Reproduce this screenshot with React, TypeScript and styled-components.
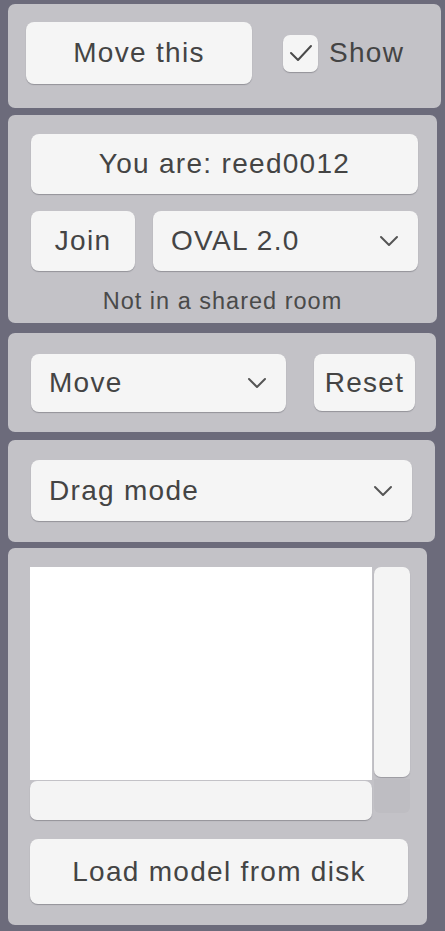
import React from "react";
import styled, { createGlobalStyle } from "styled-components";

const GlobalStyle = createGlobalStyle`
  html, body {
    margin: 0;
    padding: 0;
    background-color: #6c6b7b;
  }
  body {
    font-family: "Liberation Sans", Arial, sans-serif;
    color: #444;
  }
`;

const StyledPageRoot = styled.div`
  width: 445px;
  height: 931px;
  overflow: hidden;
  display: flex;
  flex-direction: column;
  gap: 7px;
  padding: 4px 0 0 8px;
  box-sizing: border-box;
`;

const Panel = styled.div<{ $width: number; $height: number; $mt?: number }>`
  width: ${(p) => p.$width}px;
  height: ${(p) => p.$height}px;
  margin-top: ${(p) => p.$mt ?? 0}px;
  background-color: #c3c2c7;
  border-radius: 7px;
  box-sizing: border-box;
  display: flex;
  flex-direction: column;
  flex-shrink: 0;
`;

const TopRow = styled.div`
  display: flex;
  align-items: center;
  padding: 18px 0 0 18px;
`;

const Row = styled.div<{ $gap: number }>`
  display: flex;
  align-items: flex-start;
  gap: ${(p) => p.$gap}px;
`;

const PanelBody = styled.div<{ $top: number }>`
  display: flex;
  flex-direction: column;
  padding: ${(p) => p.$top}px 0 0 23px;
`;

const Label = styled.span`
  font-size: 28px;
  letter-spacing: 1.3px;
  color: #444;
  line-height: 1;
`;

const Button = styled.div<{ $width: number; $height: number }>`
  width: ${(p) => p.$width}px;
  height: ${(p) => p.$height}px;
  background-color: #f5f5f5;
  border-radius: 8px;
  box-shadow: 0 1px 1px rgba(60, 60, 70, 0.35);
  display: flex;
  align-items: center;
  justify-content: center;
  box-sizing: border-box;
  flex-shrink: 0;
`;

const Dropdown = styled(Button)`
  justify-content: space-between;
  padding: 0 19px 0 18px;
`;

const CheckBox = styled.div`
  width: 35px;
  height: 37px;
  background-color: #f5f5f5;
  border-radius: 7px;
  box-shadow: 0 1px 1px rgba(60, 60, 70, 0.35);
  display: flex;
  align-items: center;
  justify-content: center;
  margin-left: 31px;
  margin-right: 11px;
`;

const StatusText = styled.div`
  font-size: 23.5px;
  letter-spacing: 1px;
  color: #4a4a4a;
  text-align: center;
  margin-top: 17px;
  padding-right: 23px;
`;

const ListGrid = styled.div`
  display: grid;
  grid-template-columns: 342px 36px;
  grid-template-rows: 212px 41px;
  column-gap: 2px;
`;

const ListArea = styled.div`
  background-color: #ffffff;
  grid-row: 1 / span 2;
  grid-column: 1;
  height: 213px;
`;

const ScrollV = styled.div`
  background-color: #f4f4f4;
  border-radius: 7px;
  box-shadow: 0 1px 1px rgba(60, 60, 70, 0.3);
  height: 210px;
`;

const ScrollH = styled.div`
  grid-row: 2;
  grid-column: 1;
  align-self: end;
  height: 39px;
  background-color: #f4f4f4;
  border-radius: 7px;
  box-shadow: 0 1px 1px rgba(60, 60, 70, 0.35);
  position: relative;
  z-index: 1;
`;

const Corner = styled.div`
  grid-row: 2;
  grid-column: 2;
  height: 34px;
  background-color: #bebdc2;
  border-radius: 0 0 6px 6px;
`;

const LoadButton = styled(Button)`
  margin-top: 19px;
`;

const Chevron = () => (
  <svg width="20" height="12" viewBox="0 0 20 12">
    <polyline
      points="2,2 10,10 18,2"
      fill="none"
      stroke="#555"
      strokeWidth="2"
      strokeLinecap="round"
      strokeLinejoin="round"
    />
  </svg>
);

const Check = () => (
  <svg width="26" height="20" viewBox="0 0 26 20">
    <polyline
      points="3,10 10,17 23,3"
      fill="none"
      stroke="#4a4a4a"
      strokeWidth="2"
      strokeLinecap="round"
      strokeLinejoin="round"
    />
  </svg>
);

const App = () => {
  return (
    <StyledPageRoot>
      <GlobalStyle />
      <Panel $width={433} $height={104}>
        <TopRow>
          <Button $width={226} $height={62}>
            <Label>Move this</Label>
          </Button>
          <CheckBox>
            <Check />
          </CheckBox>
          <Label>Show</Label>
        </TopRow>
      </Panel>

      <Panel $width={429} $height={208}>
        <PanelBody $top={19}>
          <Button $width={387} $height={60}>
            <Label>You are: reed0012</Label>
          </Button>
          <Row $gap={18} style={{ marginTop: 17 }}>
            <Button $width={104} $height={60}>
              <Label>Join</Label>
            </Button>
            <Dropdown $width={265} $height={60}>
              <Label>OVAL 2.0</Label>
              <Chevron />
            </Dropdown>
          </Row>
          <StatusText>Not in a shared room</StatusText>
        </PanelBody>
      </Panel>

      <Panel $width={428} $height={99} $mt={3}>
        <PanelBody $top={21}>
          <Row $gap={28}>
            <Dropdown $width={255} $height={58}>
              <Label>Move</Label>
              <Chevron />
            </Dropdown>
            <Button $width={101} $height={57}>
              <Label>Reset</Label>
            </Button>
          </Row>
        </PanelBody>
      </Panel>

      <Panel $width={427} $height={102} $mt={1}>
        <PanelBody $top={20}>
          <Dropdown $width={381} $height={61}>
            <Label>Drag mode</Label>
            <Chevron />
          </Dropdown>
        </PanelBody>
      </Panel>

      <Panel $width={419} $height={377} $mt={-1}>
        <PanelBody $top={19} style={{ paddingLeft: 22 }}>
          <ListGrid>
            <ListArea />
            <ScrollV />
            <ScrollH />
            <Corner />
          </ListGrid>
          <LoadButton $width={378} $height={65}>
            <Label>Load model from disk</Label>
          </LoadButton>
        </PanelBody>
      </Panel>
    </StyledPageRoot>
  );
};

export default App;
